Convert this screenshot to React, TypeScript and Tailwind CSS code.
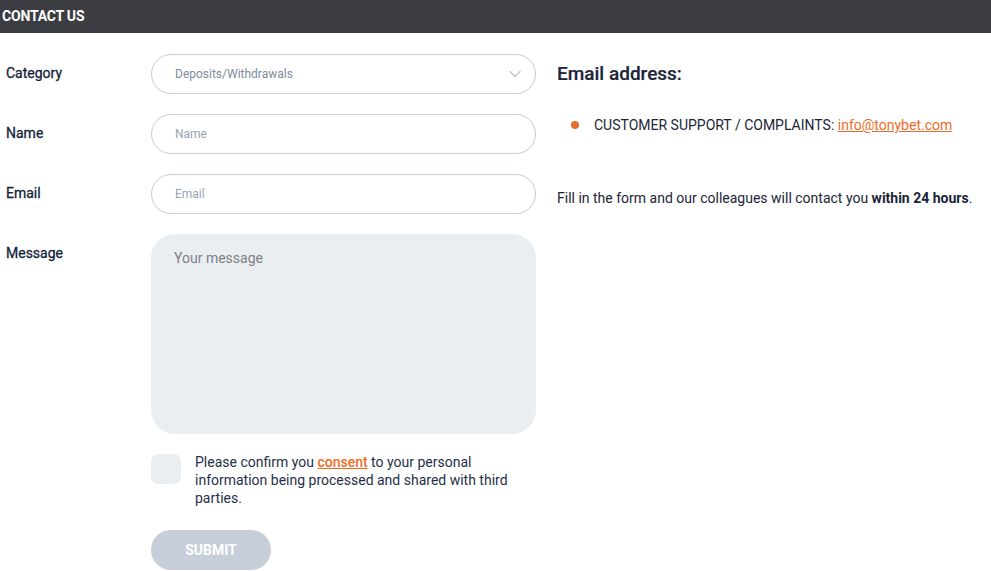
import React from 'react';

const Row: React.FC<{ label: string; children: React.ReactNode }> = ({ label, children }) => (
    <div className="flex">
        <label className="w-[145px] shrink-0 pt-[10px] text-[14px] font-normal leading-[18px] text-[#15233a] [-webkit-text-stroke:0.3px_#15233a]">{label}</label>
        <div className="w-[385px]">{children}</div>
    </div>
);

export default function App() {
    return (
        <div className="min-h-[571px] bg-white font-['Roboto',sans-serif] text-[#1c2b42]">
            {/* header */}
            <div className="flex h-[33px] items-center bg-[#3c3d42] px-[2px]">
                <h1 className="text-[14px] font-bold tracking-[-0.2px] text-white">CONTACT US</h1>
            </div>

            <div className="flex gap-[21px] pl-[6px] pt-[21px]">
                {/* form */}
                <div className="flex flex-col gap-[20px]">
                    <Row label="Category">
                        <div className="flex h-[40px] items-center justify-between rounded-full border border-[#c5cdd8] pl-[23px] pr-[14px]">
                            <span className="text-[12px] text-[#7d8ba0]">Deposits/Withdrawals</span>
                            <svg width="12" height="8" viewBox="0 0 12 8" fill="none" stroke="#b9c3cf" strokeWidth="1.3" strokeLinecap="round" strokeLinejoin="round">
                                <path d="M1 1.5l5 5 5-5" />
                            </svg>
                        </div>
                    </Row>
                    <Row label="Name">
                        <div className="flex h-[40px] items-center rounded-full border border-[#c5cdd8] px-[23px]">
                            <span className="text-[12px] text-[#97a2b2]">Name</span>
                        </div>
                    </Row>
                    <Row label="Email">
                        <div className="flex h-[40px] items-center rounded-full border border-[#c5cdd8] px-[23px]">
                            <span className="text-[12px] text-[#97a2b2]">Email</span>
                        </div>
                    </Row>
                    <Row label="Message">
                        <div className="h-[200px] rounded-[24px] bg-[#ebeef1] px-[23px] pt-[12px]">
                            <span className="text-[14px] text-[#7c8088]">Your message</span>
                        </div>
                        <div className="mt-[20px] flex gap-[14px]">
                            <div className="h-[30px] w-[30px] shrink-0 rounded-[7px] bg-[#ebeef1]" />
                            <p className="-mt-[1px] text-[14px] leading-[18px] text-[#1f3048]">
                                Please confirm you <a className="font-medium text-[#f06b22] underline">consent</a> to your personal information being processed and shared with third parties.
                            </p>
                        </div>
                        <button className="mt-[23px] h-[40px] w-[120px] rounded-full bg-[#c5ced9] text-[14px] font-bold text-white">SUBMIT</button>
                    </Row>
                </div>

                {/* info */}
                <div className="flex-1 pt-[8px]">
                    <h2 className="text-[19px] font-medium leading-[24px] text-[#1c2536] [-webkit-text-stroke:0.2px_#1c2536]">Email address:</h2>
                    <ul className="mt-[30px] pl-[14px]">
                        <li className="flex items-center gap-[15px] text-[14px] leading-[18px] text-[#1c2536]">
                            <span className="h-[8px] w-[8px] rounded-full bg-[#e56d30]" />
                            <span>CUSTOMER SUPPORT / COMPLAINTS: <a className="text-[#ee6b2a] underline">info@tonybet.com</a></span>
                        </li>
                    </ul>
                    <p className="mt-[55px] text-[14px] leading-[18px] text-[#1c2536]">
                        Fill in the form and our colleagues will contact you <b className="font-bold">within 24 hours</b>.
                    </p>
                </div>
            </div>
        </div>
    );
}
